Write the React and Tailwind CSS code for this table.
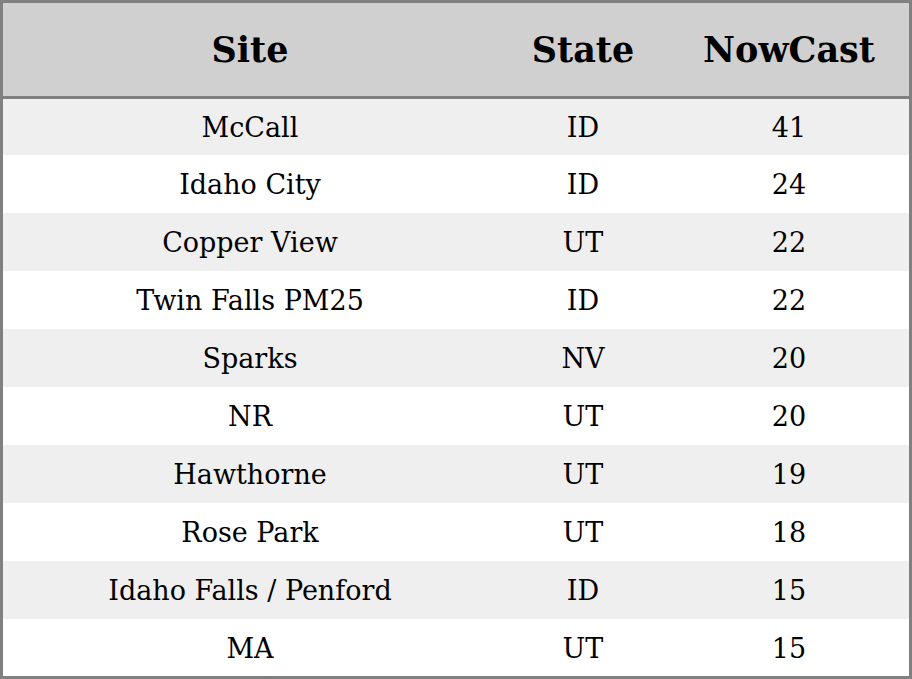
const ROWS = [
  { site: 'McCall', state: 'ID', nowcast: 41 },
  { site: 'Idaho City', state: 'ID', nowcast: 24 },
  { site: 'Copper View', state: 'UT', nowcast: 22 },
  { site: 'Twin Falls PM25', state: 'ID', nowcast: 22 },
  { site: 'Sparks', state: 'NV', nowcast: 20 },
  { site: 'NR', state: 'UT', nowcast: 20 },
  { site: 'Hawthorne', state: 'UT', nowcast: 19 },
  { site: 'Rose Park', state: 'UT', nowcast: 18 },
  { site: 'Idaho Falls / Penford', state: 'ID', nowcast: 15 },
  { site: 'MA', state: 'UT', nowcast: 15 },
];

export default function App() {
  return (
    <div className="w-[912px] h-[679px] flex flex-col border-[3px] border-[#808080] bg-white text-black font-['DejaVu_Serif',serif]">
      {/* header */}
      <div className="h-[96px] shrink-0 grid grid-cols-[494px_172px_240px] items-center pt-[2px] bg-[#d0d0d0] border-b-[3px] border-[#808080] text-[35px] font-bold">
        <div className="text-center">Site</div>
        <div className="text-center">State</div>
        <div className="text-center">NowCast</div>
      </div>

      {/* rows */}
      <div className="flex-1 flex flex-col">
        {ROWS.map((r, i) => (
          <div
            key={i}
            className={`grid grid-cols-[494px_172px_240px] items-center pt-[3px] text-[27px] ${i === 0 ? 'h-[56px]' : i === ROWS.length - 1 ? 'h-[57px]' : 'h-[58px]'} ${i % 2 === 0 ? 'bg-[#efefef]' : 'bg-white'}`}
          >
            <div className="text-center">{r.site}</div>
            <div className="text-center">{r.state}</div>
            <div className="text-center">{r.nowcast}</div>
          </div>
        ))}
      </div>
    </div>
  );
}
